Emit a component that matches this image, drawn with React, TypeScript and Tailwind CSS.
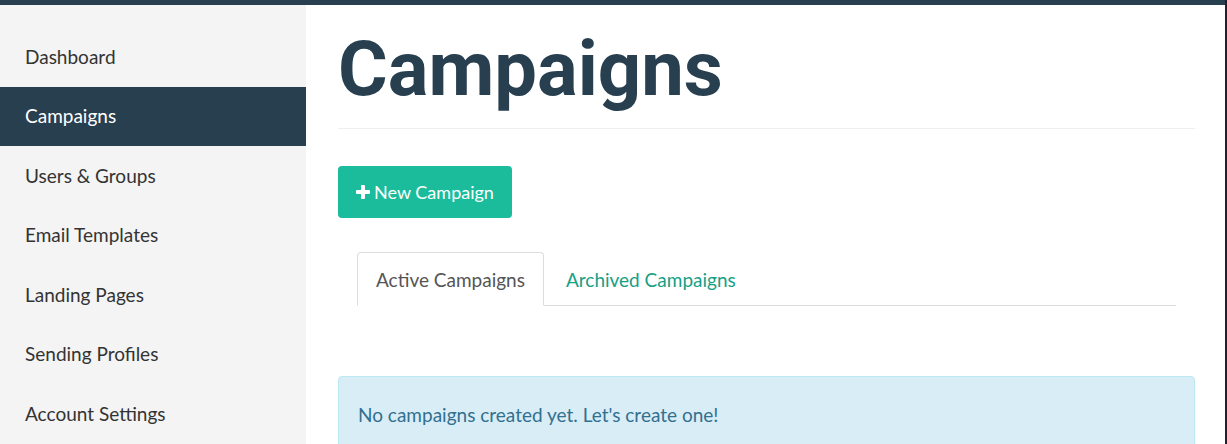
import React from 'react';

const NAV = [
  'Dashboard',
  'Campaigns',
  'Users & Groups',
  'Email Templates',
  'Landing Pages',
  'Sending Profiles',
  'Account Settings',
];

const sans = { fontFamily: 'Lato, "Open Sans", sans-serif' };

export default function App() {
  return (
    <div className="h-[444px] w-[1227px] overflow-hidden bg-white flex" style={sans}>
      <div className="flex-1 flex flex-col min-w-0">
        <div className="h-[5px] bg-[#283f50] shrink-0" />
        <div className="flex flex-1 min-h-0">
          {/* Sidebar */}
          <aside className="w-[306px] shrink-0 bg-[#f4f4f4] pt-[22px]">
            {NAV.map((item) => (
              <div
                key={item}
                className={
                  item === 'Campaigns'
                    ? 'h-[59.5px] flex items-center pl-[25px] text-[19px] bg-[#283f50] text-white'
                    : 'h-[59.5px] flex items-center pl-[25px] text-[19px] text-[#333]'
                }
              >
                {item}
              </div>
            ))}
          </aside>

          {/* Main */}
          <main className="flex-1 pl-[32px] pr-[30px] min-w-0">
            <h1
              className="text-[76px] font-bold text-[#283f50] leading-none pt-[26px] pb-[21px] border-b border-[#eee]"
              style={{ fontFamily: 'Roboto, sans-serif' }}
            >
              Campaigns
            </h1>

            <button className="mt-[37px] h-[52px] w-[174px] rounded-[4px] bg-[#1abc9c] text-white text-[18px] flex items-center justify-center gap-[4px]">
              <svg width="14" height="14" viewBox="0 0 14 14" fill="currentColor">
                <rect x="5" y="0" width="4" height="14" rx="1" />
                <rect x="0" y="5" width="14" height="4" rx="1" />
              </svg>
              New Campaign
            </button>

            <div className="mt-[34px] ml-[19px] mr-[19px] flex border-b border-[#ddd] h-[54px]">
              <div className="-mb-px px-[18px] pt-[3px] flex items-center border border-[#ddd] border-b-white rounded-t-[4px] bg-white text-[19px] text-[#555]">
                Active Campaigns
              </div>
              <div className="px-[22px] pt-[3px] flex items-center text-[19px] text-[#16a085]">
                Archived Campaigns
              </div>
            </div>

            <div className="mt-[70px] h-[100px] rounded-[4px] border border-[#bce8f1] bg-[#d9edf7] pl-[19px] pt-[24px] text-[19px] text-[#31708f]">
              No campaigns created yet. Let's create one!
            </div>
          </main>
        </div>
      </div>
      <div className="w-[2px] shrink-0 bg-[#22202e]" />
    </div>
  );
}
